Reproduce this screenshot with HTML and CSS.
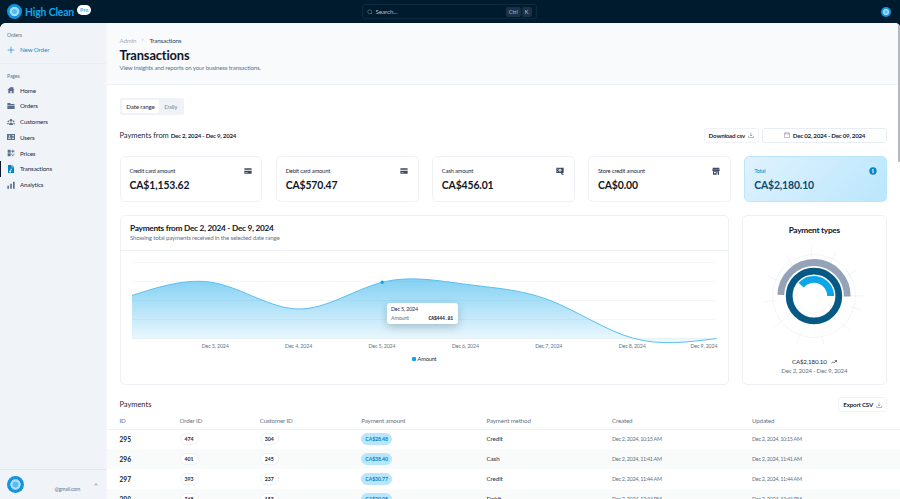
FILE: index.html
```html
<!DOCTYPE html>
<html lang="en">
<head>
    <meta charset="UTF-8">
    <meta name="viewport" content="width=device-width, initial-scale=1.0">
    <title>High Clean - Transactions</title>
    <link rel="stylesheet" href="styles.css">
</head>
<body>

    <svg width="0" height="0" class="sprite">
        <symbol id="logo" viewBox="0 0 32 32">
            <circle cx="16" cy="16" r="16" fill="#1295dd"/>
            <circle cx="16" cy="16" r="9.5" fill="#5dbbeb"/>
            <g fill="none" stroke="#c4eafc" stroke-width="1.4">
                <ellipse cx="16" cy="16" rx="9.5" ry="6.5"/>
                <ellipse cx="16" cy="16" rx="9.5" ry="6.5" transform="rotate(60 16 16)"/>
                <ellipse cx="16" cy="16" rx="9.5" ry="6.5" transform="rotate(120 16 16)"/>
            </g>
        </symbol>
        <symbol id="download" viewBox="0 0 24 24">
            <path d="M2 15v7h20v-7M12 2v14M7 11l5 5 5-5" fill="none" stroke="currentColor" stroke-width="2"/>
        </symbol>
        <symbol id="card" viewBox="0 0 24 24">
            <path d="M2 4h20a1 1 0 0 1 1 1v3H1V5a1 1 0 0 1 1-1zM1 11h22v8a1 1 0 0 1-1 1H2a1 1 0 0 1-1-1zm3 5v1.500h7V16z" fill="currentColor" fill-rule="evenodd"/>
        </symbol>
    </svg>

    <header class="topbar">
        <div class="brand">
            <svg class="brand-logo"><use href="#logo"/></svg>
            <span class="brand-name">High Clean</span>
            <span class="brand-pro">Pro</span>
        </div>
        <div class="search">
            <svg viewBox="0 0 24 24"><circle cx="11" cy="11" r="8"/><path d="M17 17l5 5"/></svg>
            <span>Search...</span>
            <kbd>Ctrl</kbd>
            <kbd>K</kbd>
        </div>
        <svg class="avatar"><use href="#logo"/></svg>
    </header>

    <div class="layout">
        <aside class="sidebar">
            <div class="side-group">
                <h4>Orders</h4>
                <a class="nav-item new"><svg viewBox="0 0 24 24"><path d="M12 2v20M2 12h20" stroke="currentColor" stroke-width="2"/></svg>New Order</a>
            </div>
            <nav class="side-group pages">
                <h4>Pages</h4>
                <a class="nav-item"><svg viewBox="0 0 24 24"><path d="M12 2L1 12h3v10h6v-7h4v7h6V12h3l-4-3.600V3h-3v2.600z"/></svg>Home</a>
                <a class="nav-item"><svg viewBox="0 0 24 24"><path d="M1 3h8l3 3h10v3H1zM1 10.500h22V21H1z"/></svg>Orders</a>
                <a class="nav-item"><svg viewBox="0 0 24 24"><circle cx="12" cy="7" r="4"/><circle cx="4" cy="10" r="2.500"/><circle cx="20" cy="10" r="2.500"/><path d="M6 21c0-10 12-10 12 0zM0 19c0-4 2-5.500 5.500-5L4 19zM24 19c0-4-2-5.500-5.500-5L20 19z"/></svg>Customers</a>
                <a class="nav-item"><svg viewBox="0 0 24 24"><path fill-rule="evenodd" d="M0 3h24v18H0zM3 17h9c0-5-9-5-9 0zM5 9a2.500 2.500 0 1 0 5 0 2.500 2.500 0 1 0-5 0M15 7v2h6V7zM15 11v2h6v-2zM15 15v2h6v-2z"/></svg>Users</a>
                <a class="nav-item"><svg viewBox="0 0 24 24"><path d="M2 2h9v9H2zM2 13h9v9H2zM16 2h3v3h3v3h-3v3h-3V8h-3V5h3zM13 14h3v3h-3zM19 14h3v3h-3zM16 18h3v4h-3z"/></svg>Prices</a>
                <a class="nav-item active"><svg viewBox="0 0 24 24"><path fill-rule="evenodd" d="M3 0h11v7h7v17H3zM11 11v6a3 3 0 1 0 1.500 2.500V14h2.500v-3zM16 0l5 5h-5z"/></svg>Transactions</a>
                <a class="nav-item"><svg viewBox="0 0 24 24"><path d="M1 14h5v9H1zM9.500 8h5v15h-5zM18 2h5v21h-5z"/></svg>Analytics</a>
            </nav>
            <div class="user">
                <svg class="user-logo"><use href="#logo"/></svg>
                <span>@gmail.com</span>
                <svg class="chevron" viewBox="0 0 10 6"><path d="M1 5l4-4 4 4"/></svg>
            </div>
        </aside>

        <main class="main">
            <section class="page-head">
                <div class="crumbs"><span>Admin</span><svg viewBox="0 0 6 10"><path d="M1 1l4 4-4 4"/></svg><b>Transactions</b></div>
                <h1>Transactions</h1>
                <p>View insights and reports on your business transactions.</p>
            </section>

            <section class="content">
                <div class="tabs">
                    <div class="tab active">Date range</div>
                    <div class="tab">Daily</div>
                </div>

                <div class="filter">
                    <h2>Payments from <b>Dec 2, 2024 - Dec 9, 2024</b></h2>
                    <button class="btn csv">Download csv <svg><use href="#download"/></svg></button>
                    <button class="btn range"><svg viewBox="0 0 24 24"><path d="M2 4h20v18H2zM2 8h20M7 1v3M17 1v3" fill="none" stroke="currentColor" stroke-width="1.800"/></svg>Dec 02, 2024 - Dec 09, 2024</button>
                </div>

                <div class="stats">
                    <div class="card stat">
                        <div class="label">Credit card amount <svg><use href="#card"/></svg></div>
                        <div class="value">CA$1,153.62</div>
                    </div>
                    <div class="card stat">
                        <div class="label">Debit card amount <svg><use href="#card"/></svg></div>
                        <div class="value">CA$570.47</div>
                    </div>
                    <div class="card stat">
                        <div class="label">Cash amount <svg viewBox="0 0 24 24"><path fill-rule="evenodd" d="M1 2h22v16h-4v5l-5-5H1zM12 5.500a4.500 4.500 0 1 0 .1 0zM4 5v3l3-3zM4 15h3l-3-3zM11 7.500h2v5h-2z" fill="currentColor"/><path d="M17 20l5 2M17 23h6" stroke="currentColor" stroke-width="2"/></svg></div>
                        <div class="value">CA$456.01</div>
                    </div>
                    <div class="card stat">
                        <div class="label">Store credit amount <svg viewBox="0 0 24 24"><path fill-rule="evenodd" d="M2 2h20v4H2zM1 7h22v5H1zM3 13h18v10h-4v-7h-3v7H3zM6 15v4h5v-4z" fill="currentColor"/></svg></div>
                        <div class="value">CA$0.00</div>
                    </div>
                    <div class="card stat total">
                        <div class="label">Total <svg viewBox="0 0 24 24"><circle cx="12" cy="12" r="11" fill="currentColor"/><path d="M15 8.500c-1-1.500-6-1.500-6 1s6 2 6 5-5 2.500-6 1M12 5.500v13" fill="none" stroke="#d4eefd" stroke-width="2"/></svg></div>
                        <div class="value">CA$2,180.10</div>
                    </div>
                </div>

                <div class="charts">
                    <div class="card chart">
                        <div class="chart-head">
                            <h3>Payments from Dec 2, 2024 - Dec 9, 2024</h3>
                            <p>Showing total payments received in the selected date range</p>
                        </div>
                        <div class="plot">
                            <svg viewBox="132 251 585 98">
                                <defs>
                                    <linearGradient id="fill" gradientUnits="userSpaceOnUse" x1="0" y1="278" x2="0" y2="343">
                                        <stop offset="0" stop-color="#0ea5e9" stop-opacity=".52"/>
                                        <stop offset="1" stop-color="#0ea5e9" stop-opacity=".06"/>
                                    </linearGradient>
                                </defs>
                                <path class="grid" d="M132 262.500h584M132 281.500h584M132 300.500h584M132 319.500h584M132 338.500h584"/>
                                <path fill="url(#fill)" d="M132 295.500C159.800 286.500 187.600 277.400 215.400 283S271 308.800 298.800 309S354.400 289.400 382.200 282.300S437.800 280.700 465.600 284.300S521.200 289.400 549 300S604.600 330.100 632.400 338S688 342.200 716.500 338.500H132z"/>
                                <path class="line" d="M132 295.500C159.800 286.500 187.600 277.400 215.400 283S271 308.800 298.800 309S354.400 289.400 382.200 282.300S437.800 280.700 465.600 284.300S521.200 289.400 549 300S604.600 330.100 632.400 338S688 342.200 716.500 338.500"/>
                                <circle cx="382.200" cy="282.300" r="1.700" fill="#0ea5e9"/>
                            </svg>
                            <div class="tooltip">
                                <div>Dec 5, 2024</div>
                                <div class="tip-row"><span>Amount</span><code>CA$444.81</code></div>
                            </div>
                        </div>
                        <div class="axis">
                            <span>Dec 3, 2024</span><span>Dec 4, 2024</span><span>Dec 5, 2024</span><span>Dec 6, 2024</span><span>Dec 7, 2024</span><span>Dec 8, 2024</span><span class="last">Dec 9, 2024</span>
                        </div>
                        <div class="legend"><i></i>Amount</div>
                    </div>

                    <div class="card types">
                        <h3>Payment types</h3>
                        <svg class="radial" viewBox="-52 -52 104 104">
                            <g class="rings">
                                <circle r="41.500"/>
                                <circle r="17"/>
                                <path d="M36 0H50M32.300 -19.700L42.700 -26M17 -33.900L22.400 -44.700M-2.300 -37.900L-3 -49.900M-21.700 -31.200L-28.500 -41M-34.900 -15L-45.900 -19.800M-37.700 4.600L-49.600 6.100M-30 23.400L-39.400 30.800M-13 35.700L-17.100 47M7.500 37.200L9.900 49M27.300 26.400L36 34.700M36.400 10.800L47.900 14.200"/>
                            </g>
                            <path d="M33.200 0.500A33.200 33.200 0 0 0 -33.200 -1.100" stroke="#94a3b8"/>
                            <circle r="24.800" stroke="#075985"/>
                            <path d="M16.700 0A16.700 16.700 0 0 0 -12.800 -10.700" stroke="#0ea5e9"/>
                        </svg>
                        <div class="sum">CA$2,180.10 <svg viewBox="0 0 24 24"><path d="M1 18l7-7 5 5 9-10M15 6h7v7"/></svg></div>
                        <p>Dec 2, 2024 - Dec 9, 2024</p>
                    </div>
                </div>

                <div class="table-head">
                    <h2>Payments</h2>
                    <button class="btn csv">Export CSV <svg><use href="#download"/></svg></button>
                </div>
            </section>

            <div class="table">
                <div class="row head"><span>ID</span><span>Order ID</span><span>Customer ID</span><span>Payment amount</span><span>Payment method</span><span>Created</span><span>Updated</span></div>
                <div class="row"><b>295</b><span><i class="pill">474</i></span><span><i class="pill">304</i></span><span><i class="pill blue">CA$28.48</i></span><span class="method">Credit</span><time>Dec 2, 2024, 10:15 AM</time><time>Dec 2, 2024, 10:15 AM</time></div>
                <div class="row"><b>296</b><span><i class="pill">401</i></span><span><i class="pill">245</i></span><span><i class="pill blue">CA$38.40</i></span><span class="method">Cash</span><time>Dec 2, 2024, 11:41 AM</time><time>Dec 2, 2024, 11:41 AM</time></div>
                <div class="row"><b>297</b><span><i class="pill">393</i></span><span><i class="pill">237</i></span><span><i class="pill blue">CA$30.77</i></span><span class="method">Credit</span><time>Dec 2, 2024, 11:44 AM</time><time>Dec 2, 2024, 11:44 AM</time></div>
                <div class="row"><b>298</b><span><i class="pill">368</i></span><span><i class="pill">153</i></span><span><i class="pill blue">CA$20.05</i></span><span class="method">Debit</span><time>Dec 2, 2024, 12:44 PM</time><time>Dec 2, 2024, 12:44 PM</time></div>
            </div>
            <div class="scrollbar"></div>
        </main>
    </div>

</body>
</html>
```
FILE: styles.css
```css
* {
    box-sizing: border-box;
}

body {
    margin: 0;
    height: 499px;
    overflow: hidden;
    background-color: #001b2e;
    font-family: Lato, sans-serif;
    font-size: 6.2px;
    letter-spacing: -0.15px;
    color: #1e293b;
}

h1, h2, h3, h4, p {
    margin: 0;
    font-weight: normal;
}

.sprite {
    position: absolute;
}

/* top bar */
.topbar {
    display: grid;
    grid-template-columns: 1fr 175px 1fr;
    align-items: center;
    height: 23px;
    padding: 0 9px 0 7px;
}

.brand {
    display: flex;
    align-items: center;
}

.brand-logo {
    width: 15px;
    height: 15px;
}

.brand-name {
    margin-left: 3px;
    font-size: 10.4px;
    font-weight: bold;
    color: #0ea5e9;
}

.brand-pro {
    margin: -3px 0 0 3px;
    padding: 0 3px;
    line-height: 10px;
    border-radius: 5px;
    background-color: #fff;
    font-size: 5.4px;
    font-weight: bold;
    letter-spacing: 0;
    color: #38a8e4;
}

.search {
    display: flex;
    align-items: center;
    height: 15px;
    padding: 0 4px;
    border: 1px solid #0c2b40;
    border-radius: 3px;
    color: #b6c2ce;
}

.search svg {
    width: 6px;
    height: 6px;
    margin-right: 3px;
    fill: none;
    stroke: #8394a5;
    stroke-width: 2;
}

.search span {
    flex: 1;
    letter-spacing: -0.05px;
}

.search kbd {
    margin-left: 1px;
    padding: 0 3px;
    line-height: 10px;
    border-radius: 2px;
    background-color: #1b3144;
    font-family: Lato, sans-serif;
    font-size: 5.6px;
    letter-spacing: 0;
}

.avatar {
    width: 10px;
    height: 10px;
    justify-self: end;
}

/* sidebar */
.layout {
    display: flex;
    height: 476px;
    border-radius: 6px 5px 0 0;
    overflow: hidden;
    background-color: #fff;
}

.sidebar {
    display: flex;
    flex-direction: column;
    width: 106.500px;
    background-color: #f0f4f9;
    border-right: 1px solid #f4f7fb;
}

.side-group {
    padding-top: 7px;
}

.side-group h4 {
    margin-left: 7px;
    height: 10px;
    line-height: 10px;
    font-size: 5.2px;
    color: #64748b;
}

.pages {
    flex: 1;
    margin-top: 5px;
    border-top: 1px solid #e9eef4;
}

.pages h4 {
    margin-bottom: 1.500px;
}

.nav-item {
    display: flex;
    align-items: center;
    height: 15.750px;
    padding-left: 7px;
    border-left: 0 solid #0f172a;
}

.nav-item svg {
    width: 8px;
    height: 8px;
    margin-right: 5px;
    fill: #5b6f89;
}

.nav-item.new {
    margin-top: 2px;
    letter-spacing: -0.1px;
    color: #0b8fd0;
}

.nav-item.active {
    padding-left: 6px;
    border-left-width: 1px;
}

.nav-item.active svg {
    fill: #0284c7;
}

.user {
    display: flex;
    align-items: center;
    height: 30px;
    padding: 0 8px 0 7px;
    border-top: 1px solid #e2e8f0;
    font-size: 5.2px;
    color: #64748b;
}

.user-logo {
    width: 17px;
    height: 17px;
}

.user span {
    margin: 8px 0 0 30.500px;
}

.chevron {
    width: 4px;
    height: 3px;
    margin-left: auto;
    fill: none;
    stroke: #475569;
    stroke-width: 1.5;
}

/* page */
.main {
    position: relative;
    flex: 1;
    min-width: 0;
}

.page-head {
    height: 62px;
    padding: 12px 13px 0;
    background-color: #f8fafc;
    border-bottom: 1px solid #eef2f6;
}

.crumbs {
    display: flex;
    align-items: center;
    height: 10px;
    color: #a3afbf;
}

.crumbs svg {
    width: 3px;
    height: 4px;
    margin: 0 5px;
    fill: none;
    stroke: #94a3b8;
}

.crumbs b {
    font-weight: normal;
    color: #334155;
}

.page-head h1 {
    line-height: 17px;
    font-size: 12.9px;
    font-weight: bold;
    color: #0f172a;
    margin-top: 2px;
}

.page-head p {
    line-height: 7px;
    letter-spacing: -0.18px;
    color: #64748b;
}

.content {
    padding: 13px 13px 0;
}

.tabs {
    display: inline-flex;
    height: 17px;
    padding: 2px;
    border-radius: 2px;
    background-color: #eff3f8;
}

.tab {
    padding: 0 4.800px;
    line-height: 13px;
    color: #7b8ca2;
}

.tab.active {
    border-radius: 2px;
    background-color: #fff;
    color: #1e293b;
}

.filter {
    display: flex;
    align-items: center;
    height: 16px;
    margin-top: 12px;
}

h2 {
    flex: 1;
    font-size: 7.5px;
    letter-spacing: -0.03px;
}

.filter h2 b {
    font-size: 6.1px;
    letter-spacing: -0.22px;
}

.btn {
    display: flex;
    align-items: center;
    justify-content: center;
    height: 15px;
    padding: 0 4px;
    border: 1px solid #eff3f7;
    border-radius: 3px;
    background-color: #fff;
    font-family: Lato, sans-serif;
    font-size: 6.2px;
    font-weight: bold;
    letter-spacing: -0.2px;
    color: #1e293b;
}

.btn svg {
    width: 6px;
    height: 6px;
    color: #64748b;
}

.btn.csv svg {
    margin-left: 3px;
}

.btn.range {
    width: 125px;
    margin-left: 3px;
    border-color: #e8edf3;
    letter-spacing: -0.25px;
}

.btn.range svg {
    margin-right: 3px;
}

.card {
    min-width: 0;
    border: 1px solid #edf1f6;
    border-radius: 5px;
    background-color: #fff;
}

.stats {
    display: grid;
    grid-template-columns: repeat(5, 1fr);
    gap: 13.300px;
    margin-top: 13px;
}

.stat {
    height: 46px;
    padding: 9px 9.500px 0 9px;
}

.label {
    display: flex;
    justify-content: space-between;
    align-items: center;
    height: 9px;
    font-size: 5.8px;
    letter-spacing: -0.18px;
}

.label svg {
    width: 8px;
    height: 8px;
    color: #3b4a63;
}

.value {
    margin-top: 2px;
    line-height: 16px;
    font-size: 10.4px;
    font-weight: bold;
    letter-spacing: -0.12px;
    color: #0f172a;
}

.stat.total {
    border-color: #bae6fd;
    background: linear-gradient(135deg, #e0f2fe, #bae6fd);
}

.total .label, .total .label svg {
    color: #0284c7;
}

.total .value {
    color: #0c4a6e;
}

/* charts */
.charts {
    display: grid;
    grid-template-columns: 1fr 145.500px;
    gap: 13px;
    margin-top: 13px;
}

.chart, .types {
    height: 170px;
}

.chart-head {
    height: 35px;
    padding: 7px 9.500px 0;
    border-bottom: 1px solid #edf1f6;
}

h3 {
    line-height: 11px;
    font-size: 8.3px;
    font-weight: bold;
    letter-spacing: -0.28px;
    color: #0f172a;
}

.chart-head p {
    line-height: 8px;
    letter-spacing: -0.2px;
    color: #64748b;
}

.plot {
    position: relative;
    height: 91px;
    padding-left: 11.500px;
}

.plot svg {
    display: block;
    width: 585px;
    height: 98px;
}

.grid {
    fill: none;
    stroke: #f3f5f8;
    stroke-width: 1;
}

.line {
    fill: none;
    stroke: #5dc0ee;
    stroke-width: 1;
}

.tooltip {
    position: absolute;
    left: 266px;
    top: 52px;
    width: 71px;
    height: 21px;
    padding: 1.500px 4.500px;
    border-radius: 3px;
    background-color: #fff;
    box-shadow: 0 3px 8px rgba(15, 23, 42, 0.22);
    font-size: 5.3px;
    line-height: 9px;
}

.tip-row {
    display: flex;
    justify-content: space-between;
    color: #64748b;
}

.tip-row code {
    font-family: "Liberation Mono", monospace;
    font-weight: bold;
    font-size: 4.8px;
    color: #1e293b;
}

.axis {
    display: flex;
    padding-left: 53px;
    line-height: 9px;
    font-size: 5.3px;
    letter-spacing: -0.15px;
    color: #64748b;
}

.axis span {
    flex: none;
    width: 83.400px;
    text-align: center;
}

.axis .last {
    width: 43.500px;
    text-align: right;
}

.legend {
    display: flex;
    align-items: center;
    justify-content: center;
    margin-top: 4px;
    line-height: 8px;
    font-size: 5.6px;
}

.legend i {
    width: 4px;
    height: 4px;
    margin-right: 2px;
    border-radius: 1px;
    background-color: #0ea5e9;
}

.types {
    display: flex;
    flex-direction: column;
    align-items: center;
    padding-top: 9px;
}

.radial {
    flex: none;
    width: 104px;
    height: 104px;
    margin-top: 8px;
    fill: none;
    stroke-width: 6.8;
}

.rings {
    stroke: #e9edf2;
    stroke-width: .6;
}

.sum {
    display: flex;
    align-items: center;
    margin-top: 9px;
    line-height: 9px;
}

.sum svg {
    width: 6px;
    height: 6px;
    margin-left: 4px;
    fill: none;
    stroke: #1e293b;
    stroke-width: 2.5;
}

.types p {
    line-height: 10px;
    letter-spacing: -0.25px;
    color: #64748b;
}

/* payments table */
.table-head {
    display: flex;
    align-items: center;
    height: 15px;
    margin-top: 12px;
}

.row {
    display: grid;
    grid-template-columns: 60px 80.300px 101.500px 125.200px 125.500px 140px 1fr;
    align-items: center;
    height: 19.800px;
    padding-left: 13px;
}

.row:nth-child(odd) {
    background-color: #f9fafa;
}

.row.head {
    height: 17.500px;
    background-color: #fff;
    border-bottom: 1px solid #eef1f5;
    color: #64748b;
}

.row b {
    font-size: 6.6px;
    letter-spacing: 0;
    color: #0f172a;
}

.row .method {
    padding-bottom: 1px;
    letter-spacing: -0.08px;
}

.row time {
    font-size: 5.5px;
    letter-spacing: -0.32px;
    color: #64748b;
}

.pill {
    display: inline-block;
    padding: 0 4px;
    line-height: 10px;
    border: 1px solid #eef2f6;
    border-radius: 6px;
    background-color: #fff;
    font-size: 5.2px;
    font-style: normal;
    font-weight: bold;
    letter-spacing: 0;
}

.pill.blue {
    padding: 0 3px;
    border-color: #bae6fd;
    background-color: #bae6fd;
    letter-spacing: -0.08px;
    color: #0284c7;
}

.scrollbar {
    position: absolute;
    top: 2px;
    right: 0;
    width: 2px;
    height: 137px;
    border-radius: 1px;
    background-color: #b5b8bc;
}
```
